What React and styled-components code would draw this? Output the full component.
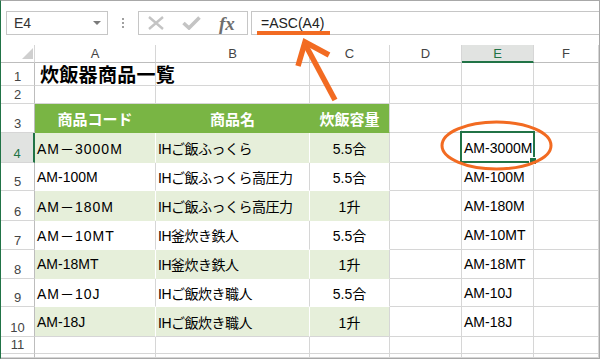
import React from "react";
import styled, { createGlobalStyle } from "styled-components";

const LINE = "#d6d6d6";
const GREEN = "#217346";
const ORANGE = "#f26b22";
const HEAD_FILL = "#79b544";
const BAND_FILL = "#e6efda";

const GlobalStyle = createGlobalStyle`
  body {
    margin: 0;
    background: #fff;
  }
  * {
    box-sizing: border-box;
  }
`;

const Frame = styled.div`
  position: relative;
  width: 600px;
  height: 359px;
  border: 1px solid #a8a8a8;
  border-left-color: ${GREEN};
  background: #fff;
  display: flex;
  flex-direction: column;
  overflow: hidden;
  font-family: "Liberation Sans", "Noto Sans CJK JP", sans-serif;
  color: #000;
`;

const FormulaBar = styled.div`
  flex: none;
  height: 44px;
  display: flex;
  align-items: flex-start;
  padding: 10px 0 0 5px;
`;

const NameBox = styled.div`
  width: 102px;
  height: 24px;
  border: 1px solid #c6c6c6;
  display: flex;
  align-items: center;
  justify-content: space-between;
  padding: 0 6px 0 7px;
  font-size: 14px;
  color: #333;
`;

const Caret = styled.span`
  width: 0;
  height: 0;
  border-left: 4px solid transparent;
  border-right: 4px solid transparent;
  border-top: 4px solid #7a7a7a;
`;

const Grip = styled.div`
  width: 30px;
  height: 24px;
  display: flex;
  flex-direction: column;
  align-items: center;
  justify-content: center;
  gap: 2px;

  span {
    width: 2px;
    height: 2px;
    background: #a0a0a0;
  }
`;

const FxBox = styled.div`
  width: 110px;
  height: 24px;
  border: 1px solid #c6c6c6;
  display: flex;
  align-items: center;
  padding-left: 8px;
  gap: 17px;
`;

const Fx = styled.span`
  font-family: "Liberation Serif", "DejaVu Serif", serif;
  font-style: italic;
  font-weight: bold;
  font-size: 19px;
  color: #6e6e6e;
  line-height: 1;
  margin-left: 1px;
`;

const FormulaInput = styled.div`
  flex: 1;
  margin-left: 3px;
  height: 24px;
  border: 1px solid #c6c6c6;
  border-right: none;
  display: flex;
  align-items: center;
  padding-left: 9px;
  font-size: 14px;
  color: #222;
`;

const Sheet = styled.div`
  flex: 1;
  display: grid;
  grid-template-columns: 34px 121px 154px 80px 72px 72px 1fr;
  grid-template-rows: 18px 23px 18px 29px 30px 28px 30px 29px 29px 28px 30px 17px 1fr;
`;

const Corner = styled.div`
  display: flex;
  justify-content: flex-end;
  align-items: flex-end;
  padding: 0 1px 3px 0;
  border-right: 1px solid ${LINE};
  border-bottom: 1px solid #bdbdbd;

  &::after {
    content: "";
    width: 0;
    height: 0;
    border-left: 11px solid transparent;
    border-bottom: 11px solid #cfcfcf;
  }
`;

const ColHead = styled.div`
  display: flex;
  align-items: center;
  justify-content: center;
  border-right: 1px solid ${LINE};
  border-bottom: ${(p) => (p.$active ? `2px solid ${GREEN}` : "1px solid #bdbdbd")};
  background: ${(p) => (p.$active ? "#e1e3e1" : "#fff")};
  color: ${(p) => (p.$active ? GREEN : "#444")};
  font-size: 13px;
`;

const RowHead = styled.div`
  display: flex;
  align-items: flex-end;
  justify-content: center;
  padding-bottom: 1px;
  border-right: ${(p) => (p.$active ? `2px solid ${GREEN}` : `1px solid #bdbdbd`)};
  border-bottom: 1px solid ${LINE};
  background: ${(p) => (p.$active ? "#e1e3e1" : "#fff")};
  color: ${(p) => (p.$active ? GREEN : "#444")};
  font-size: 13px;
  line-height: 15px;
`;

const Cell = styled.div`
  position: relative;
  display: flex;
  align-items: center;
  justify-content: ${(p) => (p.$center ? "center" : "flex-start")};
  padding: 0 2px;
  border-right: 1px solid ${(p) => p.$vline || LINE};
  border-bottom: 1px solid ${(p) => p.$hline || LINE};
  background: ${(p) => p.$fill || "transparent"};
  color: ${(p) => p.$color || "#000"};
  font-size: 14px;
  letter-spacing: ${(p) => p.$spacing || "0"};
  white-space: nowrap;
  min-width: 0;
`;

const HeadCell = styled(Cell)`
  font-family: "Noto Sans CJK JP", sans-serif;
  font-size: 15px;
  font-weight: bold;
  color: #fff;
`;

const Title = styled(Cell)`
  align-items: flex-end;
  padding-left: 5px;
  font-family: "Noto Sans CJK JP", sans-serif;
  font-size: 19px;
  font-weight: bold;
  line-height: 22px;
  letter-spacing: 0.3px;
  z-index: 1;
`;

const Selected = styled(Cell)`
  &::after {
    content: "";
    position: absolute;
    inset: -2px -2px -1px -2px;
    border: 2px solid ${GREEN};
    z-index: 2;
  }

  &::before {
    content: "";
    position: absolute;
    right: -4px;
    bottom: -3px;
    width: 6px;
    height: 6px;
    background: ${GREEN};
    border: 1px solid #fff;
    z-index: 3;
  }
`;

const Overlay = styled.svg`
  position: absolute;
  left: -1px;
  top: -1px;
  width: 600px;
  height: 359px;
  pointer-events: none;
  z-index: 5;
`;

const columns = ["A", "B", "C", "D", "E", "F"];

const products = [
  { a: "AM－3000M", b: "IHご飯ふっくら", c: "5.5合", e: "AM-3000M", wide: true },
  { a: "AM-100M", b: "IHご飯ふっくら高圧力", c: "5.5合", e: "AM-100M" },
  { a: "AM－180M", b: "IHご飯ふっくら高圧力", c: "1升", e: "AM-180M", wide: true },
  { a: "AM－10MT", b: "IH釜炊き鉄人", c: "5.5合", e: "AM-10MT", wide: true },
  { a: "AM-18MT", b: "IH釜炊き鉄人", c: "1升", e: "AM-18MT" },
  { a: "AM－10J", b: "IHご飯炊き職人", c: "5.5合", e: "AM-10J", wide: true },
  { a: "AM-18J", b: "IHご飯炊き職人", c: "1升", e: "AM-18J" },
];

const CancelIcon = () => (
  <svg width="18" height="14" viewBox="0 0 18 14">
    <path d="M2 1 L16 13 M16 1 L2 13" stroke="#c4c4c4" strokeWidth="2.4" fill="none" />
  </svg>
);

const EnterIcon = () => (
  <svg width="19" height="14" viewBox="0 0 19 14">
    <path d="M1.5 7 L7 12 L17.5 1.5" stroke="#c4c4c4" strokeWidth="3.6" fill="none" />
  </svg>
);

const EmptyRow = ({ n }) => (
  <>
    <RowHead>{n}</RowHead>
    {columns.map((c) => (
      <Cell key={c} />
    ))}
  </>
);

const App = () => {
  return (
    <>
      <GlobalStyle />
      <Frame>
        <FormulaBar>
          <NameBox>
            E4
            <Caret />
          </NameBox>
          <Grip>
            <span />
            <span />
            <span />
          </Grip>
          <FxBox>
            <CancelIcon />
            <EnterIcon />
            <Fx>fx</Fx>
          </FxBox>
          <FormulaInput>=ASC(A4)</FormulaInput>
        </FormulaBar>

        <Sheet>
          <Corner />
          {columns.map((c) => (
            <ColHead key={c} $active={c === "E"}>
              {c}
            </ColHead>
          ))}

          <RowHead>1</RowHead>
          <Title>炊飯器商品一覧</Title>
          {columns.slice(1).map((c) => (
            <Cell key={c} />
          ))}

          <EmptyRow n={2} />

          <RowHead>3</RowHead>
          <HeadCell $center $fill={HEAD_FILL} $vline={HEAD_FILL} $hline={HEAD_FILL}>
            商品コード
          </HeadCell>
          <HeadCell $center $fill={HEAD_FILL} $vline={HEAD_FILL} $hline={HEAD_FILL}>
            商品名
          </HeadCell>
          <HeadCell $center $fill={HEAD_FILL} $hline={HEAD_FILL}>
            炊飯容量
          </HeadCell>
          <Cell />
          <Cell />
          <Cell />

          {products.map((p, i) => {
            const band = i % 2 === 0;
            const last = i === products.length - 1;
            const fill = band ? BAND_FILL : "#fff";
            const hline = last ? LINE : fill;
            const vline = band ? "#fff" : LINE;
            const ECell = i === 0 ? Selected : Cell;
            return (
              <React.Fragment key={i}>
                <RowHead $active={i === 0}>{i + 4}</RowHead>
                <Cell
                  $fill={fill}
                  $hline={hline}
                  $vline={vline}
                  $spacing={p.wide ? "1px" : "0"}
                >
                  {p.a}
                </Cell>
                <Cell $fill={fill} $hline={hline} $vline={vline} $spacing="-0.5px">
                  {p.b}
                </Cell>
                <Cell $center $fill={fill} $hline={hline}>
                  {p.c}
                </Cell>
                <Cell />
                <ECell>{p.e}</ECell>
                <Cell />
              </React.Fragment>
            );
          })}

          <EmptyRow n={11} />
          <EmptyRow n="" />
        </Sheet>

        <Overlay viewBox="0 0 600 359">
          <rect x="257" y="31" width="73" height="4" fill={ORANGE} />
          <path d="M335 100 L305 44" stroke={ORANGE} strokeWidth="5.5" fill="none" />
          <path
            d="M298 66 L305 42 L329 55"
            stroke={ORANGE}
            strokeWidth="5.5"
            fill="none"
            strokeLinejoin="miter"
          />
          <ellipse
            cx="496.5"
            cy="145.5"
            rx="54.5"
            ry="23.5"
            stroke={ORANGE}
            strokeWidth="3"
            fill="none"
          />
        </Overlay>
      </Frame>
    </>
  );
};

export default App;
